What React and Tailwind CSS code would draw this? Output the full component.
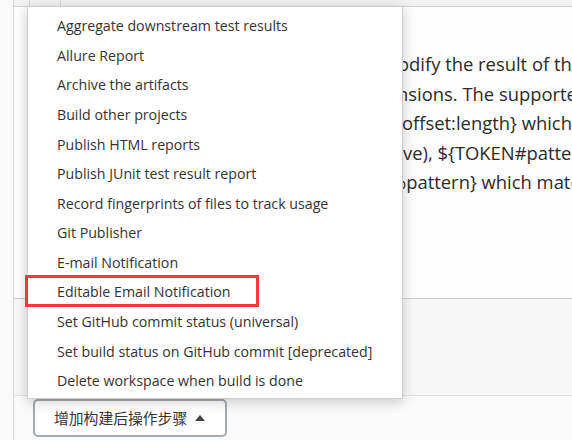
const items = [
  "Aggregate downstream test results",
  "Allure Report",
  "Archive the artifacts",
  "Build other projects",
  "Publish HTML reports",
  "Publish JUnit test result report",
  "Record fingerprints of files to track usage",
  "Git Publisher",
  "E-mail Notification",
  "Editable Email Notification",
  "Set GitHub commit status (universal)",
  "Set build status on GitHub commit [deprecated]",
  "Delete workspace when build is done"
]

// text behind the menu: the hidden head of each line, then the visible rest
const lines = [
  { head: "Tokens can also m", rest: "odify the result of the expansion", w: "w-[384px]" },
  { head: "bash shell expa", rest: "nsions. The supported modifiers", w: "w-[383px]" },
  { head: "${TOKEN:", rest: "offset:length} which cuts a", w: "w-[388px]" },
  { head: "may be negati", rest: "ve), ${TOKEN#pattern} which", w: "w-[389px]" },
  { head: "${TOKEN", rest: "%pattern} which matches", w: "w-[377px]" }
]

export default function App() {
  return (
    <div className="relative h-[440px] w-[572px] overflow-hidden bg-[#fafafa] font-['Segoe_UI','Open_Sans',sans-serif] text-[#333]">
      <div className="ml-[13px] flex h-full flex-col border-l border-[#d6d6d6]">
        <div className="flex h-[7px] shrink-0 border-b border-[#cfcfcf] bg-[#f1f1f1]">
          <div className="w-[16px] border-r border-[#d6d6d6]" />
          <div className="w-[31px] border-r border-[#d6d6d6]" />
        </div>

        <div className="h-[291px] shrink-0 bg-[#fdfdfd] pt-[42px] text-[18.4px] leading-[29.5px] text-[#2b2b2b]">
          {lines.map((line) => (
            <div key={line.rest} className="flex whitespace-nowrap">
              <span className={`${line.w} shrink-0 overflow-hidden text-right`}>{line.head}</span>
              <span>{line.rest}</span>
            </div>
          ))}
        </div>

        <div className="h-[97px] shrink-0 border-t border-[#cdcdcd] bg-[#f7f7f7]" />

        <div className="flex-1 border-t border-[#e2e2e2] pl-[19px] pt-[3px]">
          <button className="flex h-[38px] w-[194px] items-center rounded-[5px] border-2 border-[#a3abb3] bg-white pl-[19px] font-['Noto_Sans_CJK_SC',sans-serif] text-[14.8px] text-[#333]">
            增加构建后操作步骤
            <span className="ml-[8px] h-0 w-0 border-x-[5px] border-b-[6px] border-x-transparent border-b-[#444]" />
          </button>
        </div>
      </div>

      <ul className="absolute left-[27px] top-[6px] w-[376px] border border-[#cfcfcf] bg-white pb-[2px] pt-[4px] text-[14.2px] shadow-[0_3px_12px_rgba(0,0,0,0.2)]">
        {items.map((item) => (
          <li key={item} className="flex h-[29.6px] items-center whitespace-nowrap pl-[29px]">
            {item}
          </li>
        ))}
      </ul>

      <div className="absolute left-[25px] top-[275px] h-[32px] w-[234px] border-[3px] border-[#ee3b3b]" />
    </div>
  )
}
